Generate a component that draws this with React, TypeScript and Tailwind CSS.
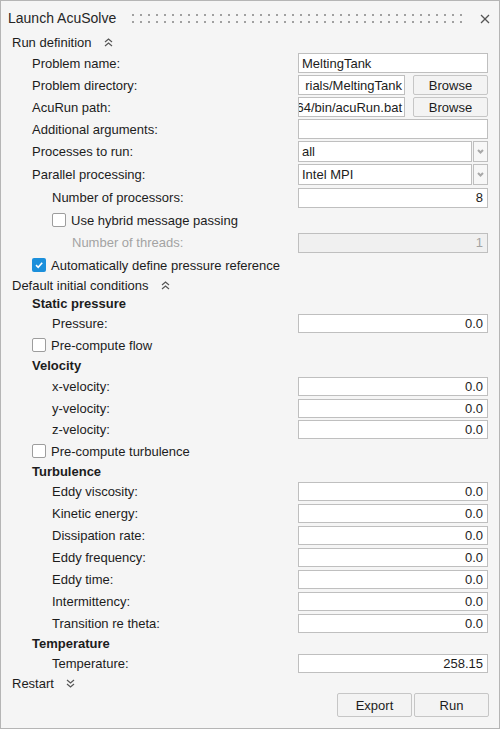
import React from "react";

const font = { fontFamily: '"Liberation Sans", Arial, sans-serif' };

function Chevrons({ down = false }: { down?: boolean }) {
  return (
    <svg width="9" height="9" viewBox="0 0 9 9" className="ml-[12px] shrink-0">
      {down ? (
        <g fill="none" stroke="#555" strokeWidth="1.2">
          <polyline points="1,1 4.5,4 8,1" />
          <polyline points="1,5 4.5,8 8,5" />
        </g>
      ) : (
        <g fill="none" stroke="#555" strokeWidth="1.2">
          <polyline points="1,4 4.5,1 8,4" />
          <polyline points="1,8 4.5,5 8,8" />
        </g>
      )}
    </svg>
  );
}

function Header({ title, h, down }: { title: string; h: string; down?: boolean }) {
  return (
    <div className={`flex items-center pl-[11px] ${h}`}>
      <span>{title}</span>
      <Chevrons down={down} />
    </div>
  );
}

function Sub({ title, h }: { title: string; h: string }) {
  return (
    <div className={`flex items-center pl-[31px] font-bold ${h}`}>{title}</div>
  );
}

function Box({ checked }: { checked?: boolean }) {
  if (checked)
    return (
      <span className="flex h-[14px] w-[14px] shrink-0 items-center justify-center rounded-[2px] bg-[#1b8fdb]">
        <svg width="10" height="10" viewBox="0 0 10 10">
          <polyline points="2,5.2 4.2,7.3 8.2,2.8" fill="none" stroke="#fff" strokeWidth="1.6" />
        </svg>
      </span>
    );
  return <span className="h-[14px] w-[14px] shrink-0 rounded-[2px] border border-[#9d9d9d] bg-white" />;
}

function Check({ label, indent, h, checked }: { label: string; indent: string; h: string; checked?: boolean }) {
  return (
    <div className={`flex items-center gap-[5px] ${indent} ${h}`}>
      <Box checked={checked} />
      <span>{label}</span>
    </div>
  );
}

function Row({
  label,
  indent,
  h,
  children,
  dim,
}: {
  label: string;
  indent: string;
  h: string;
  children: React.ReactNode;
  dim?: boolean;
}) {
  return (
    <div className={`flex items-center ${h}`}>
      <div className={`w-[297px] shrink-0 ${indent} ${dim ? "text-[#a3a3a3]" : ""}`}>{label}</div>
      <div className="flex w-[190px] items-center">{children}</div>
    </div>
  );
}

function Field({ value = "", right, h = "h-[20px]", w = "w-[190px]", disabled }: { value?: string; right?: boolean; h?: string; w?: string; disabled?: boolean }) {
  return (
    <div
      className={`flex items-center overflow-hidden whitespace-nowrap border border-[#bfbfbf] ${h} ${w} ${
        right ? "justify-end pr-[4px]" : "pl-[3px]"
      } ${disabled ? "bg-[#f0f0f0] text-[#a3a3a3]" : "bg-white"}`}
    >
      {value}
    </div>
  );
}

// path fields are scrolled to their end, so only the tail shows
function PathField({ value }: { value: string }) {
  return (
    <div className="flex h-[20px] w-[107px] items-center justify-end overflow-hidden whitespace-nowrap border border-[#bfbfbf] bg-white pr-[2px]">
      <span className="shrink-0">{value}</span>
    </div>
  );
}

function Btn({ label, w, h }: { label: string; w: string; h: string }) {
  return (
    <div className={`flex items-center justify-center rounded-[2px] border border-[#c6c6c6] bg-[#f3f3f3] ${w} ${h}`}>
      {label}
    </div>
  );
}

function Select({ value }: { value: string }) {
  return (
    <div className="flex h-[21px] items-stretch">
      <div className="flex w-[174px] items-center border border-[#bfbfbf] bg-white pl-[3px]">{value}</div>
      <div className="ml-[1px] flex w-[15px] items-center justify-center border border-[#bfbfbf] bg-[#f7f7f7]">
        <svg width="7" height="5" viewBox="0 0 7 5">
          <polyline points="1,1 3.5,3.5 6,1" fill="none" stroke="#a8a8a8" strokeWidth="2" />
        </svg>
      </div>
    </div>
  );
}

function Num({ label, value, h = "h-[22px]" }: { label: string; value: string; h?: string }) {
  return (
    <Row label={label} indent="pl-[51px]" h={h}>
      <Field value={value} right h="h-[19px]" />
    </Row>
  );
}

export default function App() {
  return (
    <div
      style={font}
      className="flex h-[729px] w-[500px] flex-col border border-[#b5b5b5] bg-[#f5f5f5] text-[13px] leading-none text-[#1c1c1c]"
    >
      <div className="flex h-[32px] items-center pl-[7px] pr-[9px]">
        <span className="pt-[2px] text-[14px] text-[#262626]">Launch AcuSolve</span>
        <svg className="ml-[16px] mt-[3px]" width="334" height="9" viewBox="0 0 334 9">
          <defs>
            <pattern id="grip" width="8" height="7" patternUnits="userSpaceOnUse">
              <rect x="0" y="0" width="2" height="2" fill="#a0a0a0" />
            </pattern>
          </defs>
          <rect x="0" y="0" width="334" height="9" fill="url(#grip)" />
        </svg>
        <svg className="ml-auto mt-[3px]" width="10" height="10" viewBox="0 0 10 10">
          <g stroke="#555" strokeWidth="1.2">
            <line x1="1" y1="1" x2="9" y2="9" />
            <line x1="9" y1="1" x2="1" y2="9" />
          </g>
        </svg>
      </div>

      <Header title="Run definition" h="h-[19px]" />
      <Row label="Problem name:" indent="pl-[31px]" h="h-[22px]">
        <Field value="MeltingTank" />
      </Row>
      <Row label="Problem directory:" indent="pl-[31px]" h="h-[22px]">
        <PathField value="rials/MeltingTank" />
        <div className="ml-[8px]">
          <Btn label="Browse" w="w-[75px]" h="h-[20px]" />
        </div>
      </Row>
      <Row label="AcuRun path:" indent="pl-[31px]" h="h-[22px]">
        <PathField value="64/bin/acuRun.bat" />
        <div className="ml-[8px]">
          <Btn label="Browse" w="w-[75px]" h="h-[20px]" />
        </div>
      </Row>
      <Row label="Additional arguments:" indent="pl-[31px]" h="h-[22px]">
        <Field />
      </Row>
      <Row label="Processes to run:" indent="pl-[31px]" h="h-[23px]">
        <Select value="all" />
      </Row>
      <Row label="Parallel processing:" indent="pl-[31px]" h="h-[23px]">
        <Select value="Intel MPI" />
      </Row>
      <Row label="Number of processors:" indent="pl-[51px]" h="h-[23px]">
        <Field value="8" right />
      </Row>
      <Check label="Use hybrid message passing" indent="pl-[51px]" h="h-[22px]" />
      <Row label="Number of threads:" indent="pl-[71px]" h="h-[23px]" dim>
        <Field value="1" right disabled />
      </Row>
      <Check label="Automatically define pressure reference" indent="pl-[31px]" h="h-[22px]" checked />

      <Header title="Default initial conditions" h="h-[18px]" />
      <Sub title="Static pressure" h="h-[18px]" />
      <Num label="Pressure:" value="0.0" />
      <Check label="Pre-compute flow" indent="pl-[31px]" h="h-[22px]" />
      <Sub title="Velocity" h="h-[19px]" />
      <Num label="x-velocity:" value="0.0" />
      <Num label="y-velocity:" value="0.0" />
      <Num label="z-velocity:" value="0.0" h="h-[21px]" />
      <Check label="Pre-compute turbulence" indent="pl-[31px]" h="h-[22px]" />
      <Sub title="Turbulence" h="h-[19px]" />
      <Num label="Eddy viscosity:" value="0.0" h="h-[21px]" />
      <Num label="Kinetic energy:" value="0.0" />
      <Num label="Dissipation rate:" value="0.0" />
      <Num label="Eddy frequency:" value="0.0" />
      <Num label="Eddy time:" value="0.0" />
      <Num label="Intermittency:" value="0.0" />
      <Num label="Transition re theta:" value="0.0" />
      <Sub title="Temperature" h="h-[19px]" />
      <Num label="Temperature:" value="258.15" h="h-[21px]" />
      <Header title="Restart" h="h-[19px]" down />

      <div className="flex justify-end gap-[2px] pr-[10px]">
        <Btn label="Export" w="w-[75px]" h="h-[24px]" />
        <Btn label="Run" w="w-[75px]" h="h-[24px]" />
      </div>
    </div>
  );
}
